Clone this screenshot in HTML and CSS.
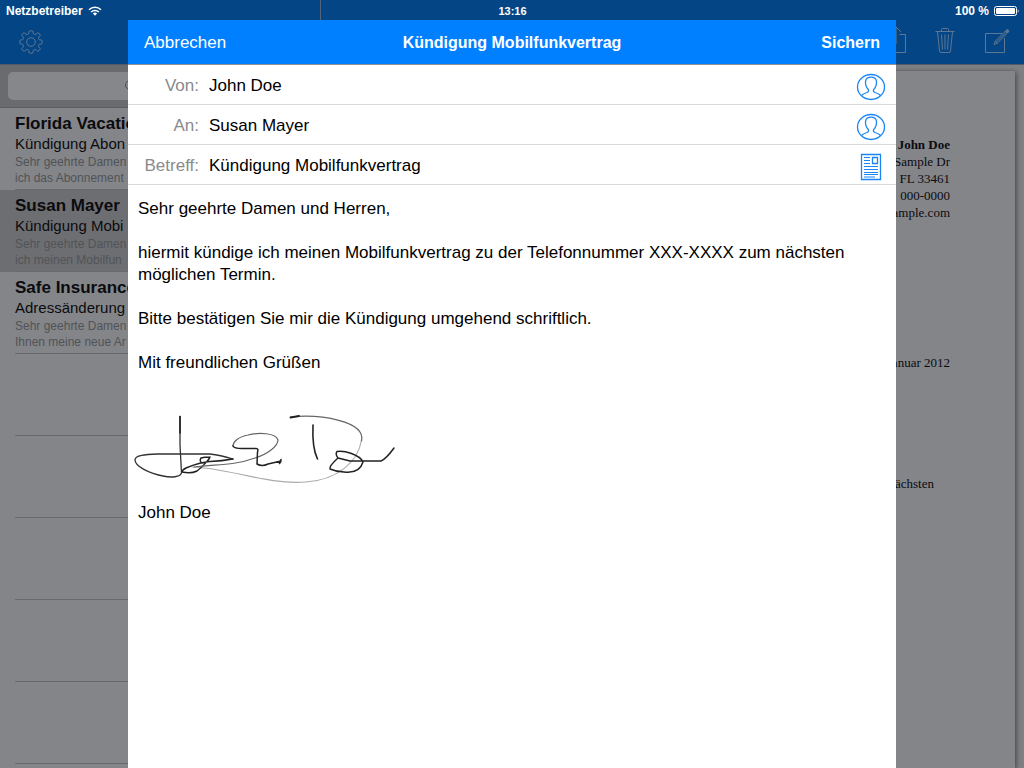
FILE: index.html
```html
<!DOCTYPE html>
<html lang="de">
<head>
<meta charset="utf-8">
<meta name="viewport" content="width=device-width, initial-scale=1">
<title>Kündigung Mobilfunkvertrag</title>
<link rel="stylesheet" href="styles.css">
</head>
<body>
<div class="app">
  <header class="topbar">
    <div class="status">
      <div class="carrier">
        <span>Netzbetreiber</span>
        <svg class="wifi" viewBox="0 0 14 10" aria-hidden="true">
          <path d="M1 3.8A8.6 8.6 0 0 1 13 3.8M3.1 6A5.6 5.6 0 0 1 10.900 6" fill="none" stroke="#fff" stroke-width="1.5"/>
          <path d="M4.9 7.6A3 3 0 0 1 9.1 7.6L7 9.8Z" fill="#fff"/>
        </svg>
      </div>
      <div class="clock">13:16</div>
      <div class="power">
        <span>100 %</span>
        <svg class="battery" viewBox="0 0 25 10" aria-hidden="true">
          <rect x=".5" y=".5" width="22" height="9" rx="2" fill="none" stroke="#fff"/>
          <rect x="2" y="2" width="19" height="6" rx="1" fill="#fff"/>
          <path d="M23.8 3.2Q25.4 5 23.8 6.8Z" fill="#fff"/>
        </svg>
      </div>
    </div>
    <div class="tools">
      <button class="icon-button" aria-label="Einstellungen">
        <svg class="gear" viewBox="0 0 24 24"><path d="M10.1 1.2Q12 .2 13.9 1.2L14.3 3.8Q15.6 5 17.1 4.1L18.8 2.7Q20.8 3.3 21.3 5.2L19.9 6.9Q19 8.5 20.2 9.7L22.8 10.1Q23.8 12 22.8 13.9L20.2 14.3Q19 15.6 19.9 17.1L21.3 18.8Q20.8 20.7 18.8 21.3L17.1 19.9Q15.6 19 14.3 20.2L13.9 22.8Q12 23.8 10.1 22.8L9.7 20.2Q8.5 19 6.9 19.9L5.2 21.3Q3.3 20.8 2.7 18.8L4.1 17.1Q5 15.6 3.8 14.3L1.2 13.9Q.2 12 1.2 10.1L3.8 9.7Q5 8.5 4.1 6.9L2.7 5.2Q3.3 3.3 5.2 2.7L6.9 4.1Q8.5 5 9.7 3.8Z"/><circle cx="12" cy="12" r="4.3"/></svg>
      </button>
      <div class="tool-group">
        <button class="icon-button" aria-label="Teilen">
          <svg class="tool-icon" viewBox="0 0 26 28"><path d="M8.500 8.500H2.500V26.500H21.500V8.500H15.500M12 18V1M7 6L12 1L17 6"/></svg>
        </button>
        <button class="icon-button" aria-label="Löschen">
          <svg class="tool-icon" viewBox="2 0 26 28"><path d="M3.500 5.500H22.500M9.500 5.500V3.500Q9.500 2.500 10.500 2.500H15.500Q16.500 2.500 16.500 3.500V5.500M5.500 5.500L7.500 25Q7.700 26.500 9 26.500H17Q18.300 26.500 18.500 25L20.500 5.500M9.500 8.500L10.500 23.500M13 8.500V23.500M16.500 8.500L15.500 23.500"/></svg>
        </button>
        <button class="icon-button" aria-label="Verfassen">
          <svg class="tool-icon" viewBox="0 0 26 28"><path d="M18 7.500H1.500V26.500H20.500V12M10 18.500L11.300 15L21.500 5L23.500 7L13.300 17.200ZM11.300 15L13.300 17.200M12.500 16L22.500 6"/><path d="M21.500 5L22.700 3.900Q23.700 3.200 24.500 4.100Q25.200 5 24.500 5.900L23.500 7Z" fill="#5f7791"/></svg>
        </button>
      </div>
    </div>
  </header>

  <div class="panes">
    <aside class="sidebar">
      <div class="search">
        <label class="search-box">
          <svg class="lens" viewBox="0 0 14 14" aria-hidden="true"><circle cx="6" cy="6" r="4.500"/><path d="M9.500 9.500L13 13"/></svg>
          <input class="search-input" type="search" aria-label="Suchen">
        </label>
      </div>
      <ul class="letters">
        <li class="letter"><a class="letter-link" href="#florida"><strong class="name">Florida Vacatio</strong><span class="subject">Kündigung Abon</span><span class="preview">Sehr geehrte Damen<br>ich das Abonnement</span></a></li>
        <li class="letter selected"><a class="letter-link" href="#mayer"><strong class="name">Susan Mayer</strong><span class="subject">Kündigung Mobi</span><span class="preview">Sehr geehrte Damen<br>ich meinen Mobilfun</span></a></li>
        <li class="letter"><a class="letter-link" href="#insurance"><strong class="name">Safe Insurance</strong><span class="subject">Adressänderung</span><span class="preview">Sehr geehrte Damen<br>Ihnen meine neue Ar</span></a></li>
        <li class="letter"></li>
        <li class="letter"></li>
        <li class="letter"></li>
        <li class="letter"></li>
        <li class="letter"></li>
      </ul>
    </aside>
    <main class="desk">
      <article class="paper">
        <address class="sender"><strong>John Doe</strong><br>Sample Dr<br>FL 33461<br>000-0000<br>example.com</address>
        <p class="date">Januar 2012</p>
        <p class="extract">nächsten</p>
      </article>
    </main>
  </div>

  <section class="dialog" role="dialog" aria-labelledby="dialog-title">
    <header class="dialog-bar">
      <button class="bar-button">Abbrechen</button>
      <h1 class="dialog-title" id="dialog-title">Kündigung Mobilfunkvertrag</h1>
      <button class="bar-button save">Sichern</button>
    </header>
    <div class="field">
      <label class="field-label" for="from">Von:</label>
      <input class="field-input" id="from" value="John Doe">
      <button class="icon-button" aria-label="Absender wählen">
        <svg class="field-icon" viewBox="0 0 30 28"><ellipse cx="15" cy="14" rx="13.500" ry="12.500"/><path d="M5.500 22.500Q7 20.700 11 19.500Q13.300 18.700 12.300 16.500Q9.300 13.500 9.500 8.500Q10 4.200 15 4.200Q20 4.200 20.500 8.500Q20.700 13.500 17.700 16.500Q16.700 18.700 19 19.500Q23 20.700 24.500 22.500"/></svg>
      </button>
    </div>
    <div class="field">
      <label class="field-label" for="to">An:</label>
      <input class="field-input" id="to" value="Susan Mayer">
      <button class="icon-button" aria-label="Empfänger wählen">
        <svg class="field-icon" viewBox="0 0 30 28"><ellipse cx="15" cy="14" rx="13.500" ry="12.500"/><path d="M5.500 22.500Q7 20.700 11 19.500Q13.300 18.700 12.300 16.500Q9.300 13.500 9.500 8.500Q10 4.200 15 4.200Q20 4.200 20.500 8.500Q20.700 13.500 17.700 16.500Q16.700 18.700 19 19.500Q23 20.700 24.500 22.500"/></svg>
      </button>
    </div>
    <div class="field">
      <label class="field-label" for="subject">Betreff:</label>
      <input class="field-input" id="subject" value="Kündigung Mobilfunkvertrag">
      <button class="icon-button" aria-label="Vorlage wählen">
        <svg class="field-icon" viewBox="0 0 30 28"><path d="M5.500 1.500H24.500V26.500H5.500ZM16.500 4.500H21.500V10.500H16.500Z"/><path d="M8 4.500H14M8 7.500H14M8 10.500H14M8 13.500H22M8 16.500H22M8 19.500H22M8 21.500H22M8 24H19" stroke-width="1"/></svg>
      </button>
    </div>
    <div class="message" role="textbox" aria-multiline="true" aria-label="Nachricht" contenteditable="true" spellcheck="false">
      <p>Sehr geehrte Damen und Herren,</p>
      <p>hiermit kündige ich meinen Mobilfunkvertrag zu der Telefonnummer XXX-XXXX zum nächsten möglichen Termin.</p>
      <p>Bitte bestätigen Sie mir die Kündigung umgehend schriftlich.</p>
      <p>Mit freundlichen Grüßen</p>
      <svg class="signature" viewBox="0 0 280 100" role="img" aria-label="Unterschrift">
        <g fill="none" stroke-linecap="round" stroke-linejoin="round">
          <path d="M233.500 39C230 62 208 79 178 81C138 84 102 67 64 66" stroke="#aaa" stroke-width="1.100"/>
          <path d="M162.500 16C192 13 238 20 233.500 40" stroke="#666" stroke-width="1.200"/>
          <path d="M162.500 16.500L171 15" stroke="#222" stroke-width="1.900"/>
          <path d="M52 15.500V44L53.500 72C52 76 44 77 35 75C20 72 7 65 7 59C7 54 17 53.500 30 53H82Q92 54 105 58" stroke="#333" stroke-width="1.300"/>
          <path d="M52 15.500V32" stroke="#222" stroke-width="1.600"/>
          <path d="M105 58Q94 60 82 60.500C73 61 65 64 58 67Q54 69 54 71Q63 73 69 70Q77 64 82 56Q76 56 73 57Q71 60 74 62Q80 62 82 56" stroke="#222" stroke-width="1.400"/>
          <path d="M66 66C88 63 105 65 127 57C140 53 150 45 150 39C148 32 131 31 120 34C110 36 105 41 105 45" stroke="#666" stroke-width="1.200"/>
          <path d="M105 45Q106 47.500 114 47.500H127Q131 47 129.500 51L129 63Q134 66 140 63L153 60L151.500 62.500L153 58.500" stroke="#222" stroke-width="1.500"/>
          <path d="M185 24Q184 47 189.500 58" stroke="#222" stroke-width="1.600"/>
          <path d="M210 57Q207 53 209 50.500C216 49 232 54 235 61C232 71 224 72 216 71Q209 71 202 68Q201 65 210 57L222 60H253Q258 58 266 47" stroke="#222" stroke-width="1.500"/>
        </g>
      </svg>
      <p>John Doe</p>
    </div>
  </section>
</div>
</body>
</html>
```
FILE: styles.css
```css
* { box-sizing: border-box; }
body { margin: 0; font-family: "Liberation Sans", Arial, sans-serif; color: #000; }
button, input { font: inherit; border: 0; padding: 0; margin: 0; background: none; color: inherit; }
button { display: flex; cursor: pointer; }
p, h1, ul { margin: 0; padding: 0; }
svg { display: block; flex: none; }

.app { position: relative; height: 100vh; overflow: hidden; display: flex; flex-direction: column; background: #818388; }
.topbar { background: linear-gradient(to right, transparent 320px, #52637a 320px, #52637a 321px, transparent 321px), #044685; border-bottom: 1px solid #52596a; flex: none; }
.status { display: grid; grid-template-columns: 1fr auto 1fr; align-items: center; height: 20px; padding: 2px 5px 0 6px; color: #fff; font-size: 12px; line-height: 18px; font-weight: bold; }
.clock { font-size: 11px; }
.carrier, .power { display: flex; align-items: center; gap: 5px; }
.power { justify-content: flex-end; }
.wifi { width: 14px; height: 10px; }
.battery { width: 25px; height: 10px; }
.tools { display: flex; align-items: center; justify-content: space-between; height: 44px; padding: 0 14px 0 19px; }
.tool-group { display: flex; gap: 24px; }
.gear { width: 24px; height: 24px; }
.tool-icon { width: 26px; height: 28px; margin-bottom: 4px; }
.gear, .tool-icon { fill: none; stroke: #5f7791; stroke-width: 1; }

.panes { flex: 1; min-height: 0; display: flex; }
.sidebar { width: 320px; flex: none; background: #838589; overflow: hidden; }
.search { padding: 7px 8px; background: #6a6b6f; border-bottom: 1px solid #5c5d61; }
.search-box { display: flex; align-items: center; height: 28px; padding-left: 116px; gap: 6px; border-radius: 5px; background: #85878b; }
.search-input { flex: 1; min-width: 0; outline: 0; font-size: 14px; }
.lens { width: 14px; height: 14px; fill: none; stroke: #4c4d50; }
.letters { list-style: none; }
.letter { height: 82px; padding-left: 15px; background: linear-gradient(#67696c, #67696c) 15px 100% / 100% 1px no-repeat; }
.selected { background-color: #6d6e72; }
.letter-link { display: flex; flex-direction: column; padding-top: 5px; color: #0b0b0e; text-decoration: none; white-space: nowrap; }
.name { font-size: 17px; line-height: 21px; }
.subject { font-size: 15px; line-height: 20px; }
.preview { font-size: 12px; line-height: 16px; color: #525356; }

.desk { flex: 1; min-width: 0; padding: 6px 9px 0; display: flex; background: #7e8084; }
.paper { flex: 1; padding: 65px 65px 0; background: #838589; box-shadow: 1px 1px 5px rgba(0, 0, 0, .5); font-family: "Liberation Serif", "Times New Roman", serif; font-size: 13px; line-height: 17px; color: #0b0b10; text-align: right; }
.sender { font-style: normal; }
.date { padding-top: 133px; }
.extract { padding: 104px 16px 0 0; }

.dialog { position: absolute; top: 20px; bottom: 0; left: 12.5%; right: 12.5%; display: flex; flex-direction: column; background: #fff; font-size: 17px; line-height: 22px; }
.dialog-bar { display: grid; grid-template-columns: 1fr auto 1fr; align-items: center; height: 45px; padding: 2px 16px 0; background: #007fff; border-bottom: 1px solid #8f9296; color: #fff; }
.dialog-title { font-size: 16px; }
.save { justify-self: end; font-size: 16px; font-weight: bold; }
.field { display: flex; align-items: center; height: 40px; padding: 2px 10px 0 0; border-bottom: 1px solid #d9d9db; }
.field-label { width: 71px; text-align: right; color: #8a8a8d; }
.field-input { flex: 1; min-width: 0; margin-left: 10px; height: 28px; outline: 0; }
.field-icon { width: 30px; height: 28px; margin-top: 2px; fill: none; stroke: #1a86f5; stroke-width: 1.3; }
.message { flex: 1; padding: 13px 10px; outline: 0; }
.message p { margin-bottom: 22px; }
.signature { width: 280px; height: 100px; margin: 27px 0 1px -10px; }
```
